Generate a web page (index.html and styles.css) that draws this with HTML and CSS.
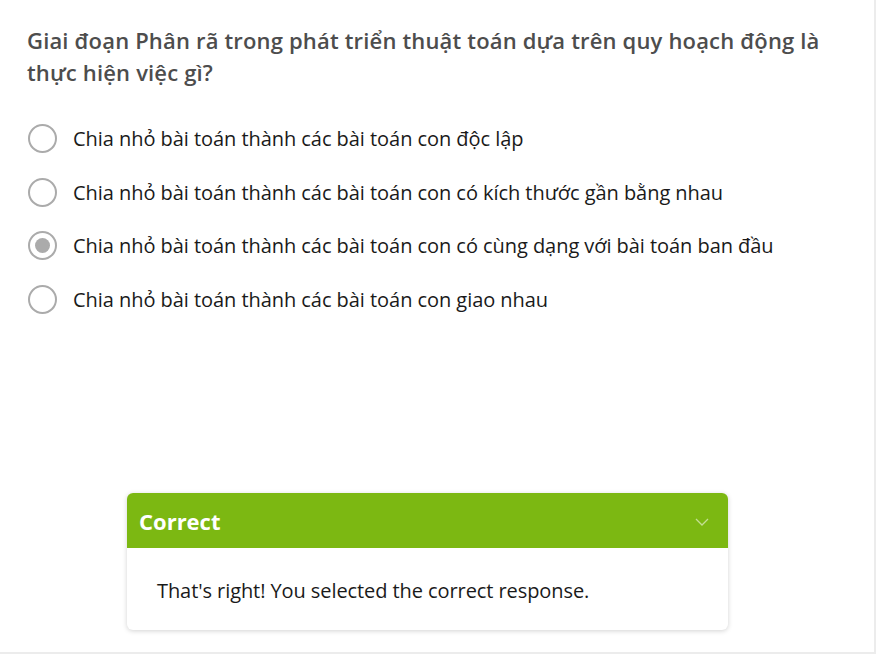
FILE: index.html
```html
<!DOCTYPE html>
<html lang="vi">
<head>
<meta charset="utf-8">
<link rel="stylesheet" href="styles.css">
</head>
<body>
<div class="frame">
  <div class="question">Giai đoạn Phân rã trong phát triển thuật toán dựa trên quy hoạch động là thực hiện việc gì?</div>
  <ul class="options">
    <li class="option"><span class="radio"></span><span class="label">Chia nhỏ bài toán thành các bài toán con độc lập</span></li>
    <li class="option"><span class="radio"></span><span class="label">Chia nhỏ bài toán thành các bài toán con có kích thước gần bằng nhau</span></li>
    <li class="option"><span class="radio checked"></span><span class="label">Chia nhỏ bài toán thành các bài toán con có cùng dạng với bài toán ban đầu</span></li>
    <li class="option"><span class="radio"></span><span class="label">Chia nhỏ bài toán thành các bài toán con giao nhau</span></li>
  </ul>
  <div class="feedback">
    <div class="fb-head">
      <span class="fb-title">Correct</span>
      <svg class="chev" width="14" height="8" viewBox="0 0 14 8"><path d="M1 1 L7 7 L13 1" fill="none" stroke="rgba(255,255,255,0.55)" stroke-width="1.3"/></svg>
    </div>
    <div class="fb-body">That's right! You selected the correct response.</div>
  </div>
</div>
</body>
</html>
```
FILE: styles.css
```css
html, body {
  margin: 0;
  padding: 0;
  background: #ffffff;
}
body {
  font-family: "Open Sans", "Noto Sans", sans-serif;
}
.frame {
  width: 874px;
  height: 652px;
  border-right: 2px solid #ececec;
  border-bottom: 2px solid #ececec;
  position: relative;
  box-sizing: content-box;
}
.question {
  padding: 24px 30px 0 27px;
  font-size: 22px;
  letter-spacing: 0.17px;
  font-weight: 600;
  line-height: 32px;
  color: #4d4d4d;
}
.options {
  list-style: none;
  margin: 24px 0 0 0;
  padding: 0 0 0 28px;
}
.option {
  display: flex;
  align-items: center;
  height: 53.5px;
  font-size: 20px;
  letter-spacing: -0.05px;
  color: #1a1a1a;
}
.option:first-child {
  margin-top: 1px;
}
.radio {
  width: 25px;
  height: 25px;
  border: 2px solid #ababab;
  border-radius: 50%;
  flex: none;
  margin-right: 16px;
  display: flex;
  align-items: center;
  justify-content: center;
}
.radio.checked::after {
  content: "";
  width: 15px;
  height: 15px;
  border-radius: 50%;
  background: #ababab;
}
.feedback {
  position: absolute;
  left: 127px;
  top: 493px;
  width: 601px;
  border-radius: 6px;
  background: #fff;
  box-shadow: 0 1px 5px rgba(0,0,0,0.18);
  overflow: hidden;
}
.fb-head {
  height: 55px;
  background: #7cb812;
  display: flex;
  align-items: center;
  justify-content: space-between;
  padding: 0 19px 0 12px;
}
.fb-title {
  color: #fff;
  font-weight: 700;
  font-size: 22px;
  margin-top: 1px;
}
.chev {
  margin-top: 2px;
}
.fb-body {
  height: 82px;
  display: flex;
  align-items: center;
  padding-left: 30px;
  font-size: 20px;
  letter-spacing: -0.08px;
  color: #1a1a1a;
  padding-top: 2px;
  box-sizing: border-box;
}
```
